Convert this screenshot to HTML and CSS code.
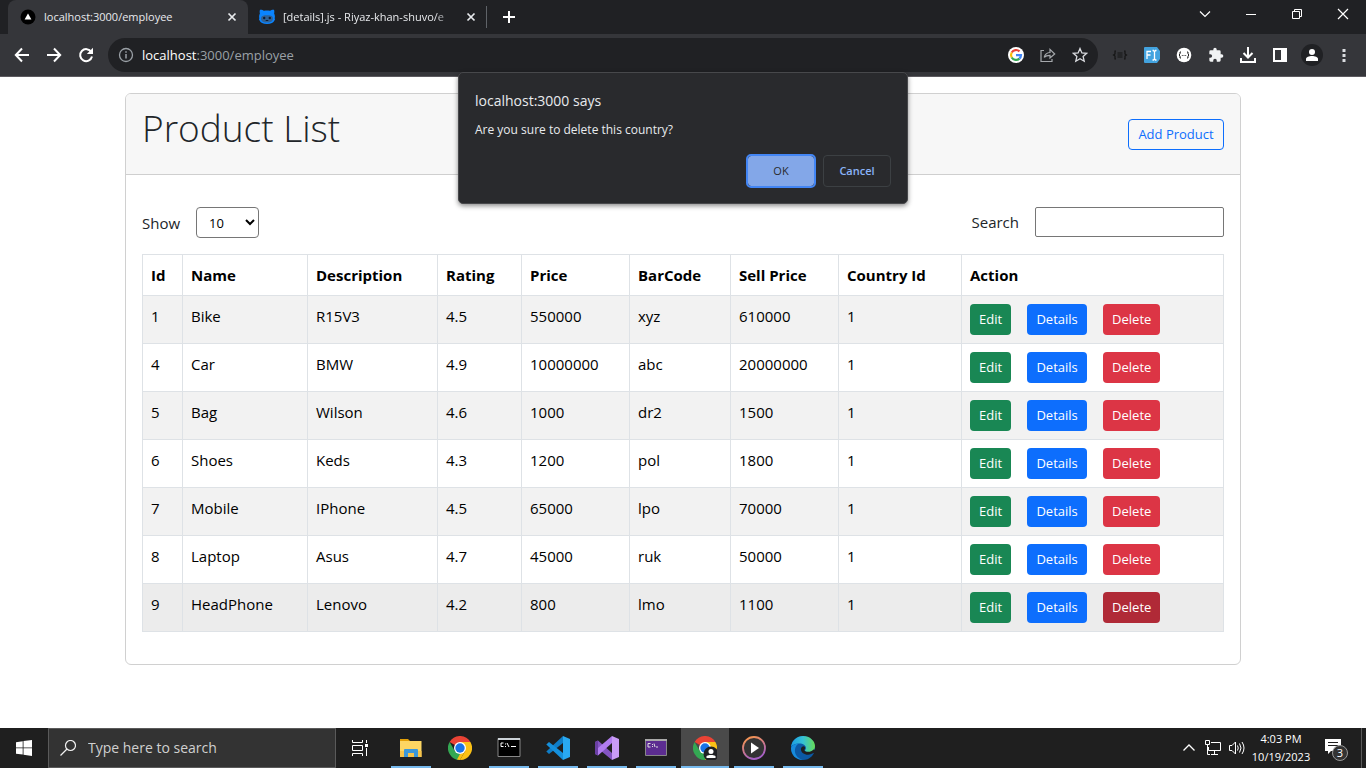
FILE: index.html
```html
<!DOCTYPE html>
<html lang="en">
<head>
<meta charset="utf-8">
<meta name="viewport" content="width=device-width, initial-scale=1">
<title>localhost:3000/employee</title>
<link rel="stylesheet" href="styles.css">
</head>
<body>
<div class="desktop">
  <header class="browser">
    <div class="tabstrip">
      <div class="tab tab-active">
        <svg class="icon16" viewBox="0 0 16 16"><circle cx="8" cy="8" r="7.5" fill="#000"/><path d="M8 4.5 11.4 10.5H4.6z" fill="#fff"/></svg>
        <span class="tab-title">localhost:3000/employee</span>
        <button class="tab-close" aria-label="Close tab"><svg class="icon16" viewBox="0 0 16 16"><path d="M4.5 4.5l7 7M11.5 4.5l-7 7" stroke="#e8eaed" stroke-width="1.7"/></svg></button>
      </div>
      <div class="tab">
        <svg class="icon16" viewBox="0 0 16 16"><path d="M1 .8C2 .3 4 1 5 1.8c2-.4 4-.4 6 0C12 1 14 .3 15 .8c.5 1.200.4 2.600.1 3.700.8 1.300 1 3 .6 4.800L16 11l-.7.6C14.700 14 12 15 8 15S1.300 14 .7 11.600L0 11l.3-1.700C0 7.500.1 5.800.9 4.500.6 3.400.5 2 1 .8z" fill="#0a84ff"/><path d="M4 6.700c2-.5 6-.5 8 0 2.200.5 2.300 3.300 1.500 4.800-.8 1.500-2.800 2-5.500 2s-4.700-.5-5.500-2C1.700 10 1.800 7.200 4 6.700z" fill="#2d6299"/><circle cx="5.200" cy="9" r="1.200" fill="#111d31"/><circle cx="10.800" cy="9" r="1.200" fill="#111d31"/><path d="M6.700 11.500h2.600" stroke="#111d31"/></svg>
        <span class="tab-title tab-title-fade">[details].js - Riyaz-khan-shuvo/e</span>
        <button class="tab-close" aria-label="Close tab"><svg class="icon16" viewBox="0 0 16 16"><path d="M4.500 4.500l7 7M11.500 4.500l-7 7" stroke="#e8eaed" stroke-width="1.700"/></svg></button>
      </div>
      <button class="new-tab" aria-label="New tab"><svg class="icon16" viewBox="0 0 16 16"><path d="M8 2v12M2 8h12" stroke="#fff" stroke-width="2"/></svg></button>
      <div class="window-controls">
        <button aria-label="Search tabs"><svg class="icon16" viewBox="0 0 16 16"><path d="M3 5.500l5 5 5-5" fill="none" stroke="#fff" stroke-width="1.200"/></svg></button>
        <button aria-label="Minimize"><svg class="icon16" viewBox="0 0 16 16"><path d="M3 8.500h10" stroke="#fff"/></svg></button>
        <button aria-label="Restore"><svg class="icon16" viewBox="0 0 16 16"><path d="M3.500 5.500h7v7h-7zM5.500 5.500v-2h7v7h-2" fill="none" stroke="#fff"/></svg></button>
        <button aria-label="Close"><svg class="icon16" viewBox="0 0 16 16"><path d="M3 3l10 10M13 3L3 13" stroke="#fff" stroke-width="1.200"/></svg></button>
      </div>
    </div>
    <div class="toolbar">
      <div class="tools">
        <button aria-label="Back"><svg class="icon16" viewBox="0 0 16 16"><path d="M15 8H2M8 1.500L1.800 8 8 14.500" fill="none" stroke="#fff" stroke-width="2"/></svg></button>
        <button aria-label="Forward"><svg class="icon16" viewBox="0 0 16 16"><path d="M1 8h13M8 1.500L14.200 8 8 14.500" fill="none" stroke="#fff" stroke-width="2"/></svg></button>
        <button aria-label="Reload"><svg class="icon16" viewBox="0 0 16 16"><path d="M13.300 5A6 6 0 1 0 14 9.500" fill="none" stroke="#fff" stroke-width="2"/><path d="M15 .8v6.200H8.800z" fill="#fff"/></svg></button>
      </div>
      <div class="omnibox">
        <svg class="icon16" viewBox="0 0 16 16"><circle cx="8" cy="8" r="6.500" fill="none" stroke="#9aa0a6" stroke-width="1.300"/><path d="M8 7v4.500M8 4.300v1.500" stroke="#9aa0a6" stroke-width="1.500"/></svg>
        <div class="address" role="textbox" aria-label="Address"><span class="host">localhost</span>:3000/employee</div>
        <div class="tools">
          <button aria-label="Google Lens"><svg class="icon16" viewBox="0 0 16 16"><circle cx="8" cy="8" r="8" fill="#fff"/><g fill="none" stroke-width="2.200"><path d="M11.500 4.400A5 5 0 0 0 3.700 5.500" stroke="#ea4335"/><path d="M3.700 5.500a5 5 0 0 0 0 5" stroke="#fbbc05"/><path d="M3.700 10.500a5 5 0 0 0 7.700 1.100" stroke="#34a853"/><path d="M11.400 11.600A5 5 0 0 0 13 8.100H8" stroke="#4285f4"/></g></svg></button>
          <button aria-label="Share"><svg class="icon16" viewBox="0 0 16 16"><path d="M4 3.500H1v11h11V12M4.200 10.300C5 7 7 5.600 10 5.500V2.400L14.700 7 10 11V8.300c-2.600 0-4.500.5-5.800 2z" fill="none" stroke="#a5a8ac" stroke-width="1.200"/></svg></button>
          <button aria-label="Bookmark"><svg class="icon16" viewBox="0 0 16 16"><path d="M8 1.500l1.900 4.400 4.800.4-3.600 3.200 1.100 4.700L8 11.700l-4.200 2.500 1.100-4.700L1.300 6.300l4.800-.4z" fill="none" stroke="#dadce0" stroke-width="1.300"/></svg></button>
        </div>
      </div>
      <div class="tools">
        <button aria-label="JSON formatter"><svg class="icon16" viewBox="0 0 16 16"><path d="M4 4H3v3L1.500 8 3 9v3h1M12 4h1v3l1.500 1L13 9v3h-1M5.500 6h5M5.500 8h5M5.500 10h5" fill="none" stroke="#151515" stroke-width="1.200"/></svg></button>
        <button aria-label="Font finder"><svg class="icon16" viewBox="0 0 16 16"><path d="M1 0h12l3 4v8l-3 4H1q-1 0-1-1V1q0-1 1-1z" fill="#43a3df"/><path d="M3 12V4.500h4M3 8h3.500M8.500 3.500h1L10.500 5v7l-1 1h-1M12.500 3.500h-1L10.500 5M10.500 12l1 1h1" fill="none" stroke="#fff" stroke-width="1.300"/></svg></button>
        <button aria-label="JSON viewer"><svg class="icon16" viewBox="0 0 16 16"><circle cx="8" cy="8" r="7.300" fill="#fff"/><path d="M5 5H4v2L3 8l1 1v2h1M11 5h1v2l1 1-1 1v2h-1" fill="none" stroke="#222"/><path d="M5.800 8.500h4.400" stroke="#444" stroke-dasharray="1 .7"/></svg></button>
        <button aria-label="Extensions"><svg class="icon16" viewBox="0 0 24 24"><path d="M20.500 11H19V7a2 2 0 0 0-2-2h-4V3.500a2.500 2.500 0 0 0-5 0V5H4a2 2 0 0 0-2 2v3.800h1.500a2.700 2.700 0 0 1 0 5.400H2V20a2 2 0 0 0 2 2h3.800v-1.500a2.700 2.700 0 0 1 5.400 0V22H17a2 2 0 0 0 2-2v-4h1.500a2.500 2.500 0 0 0 0-5z" fill="#f1f3f4"/></svg></button>
        <button aria-label="Downloads"><svg class="icon16" viewBox="0 0 16 16"><path d="M8 0v10M3.500 6L8 10.500 12.500 6M1 11v4h14v-4" fill="none" stroke="#fff" stroke-width="2"/></svg></button>
        <button aria-label="Side panel"><svg class="icon16" viewBox="0 0 16 16"><path d="M1 1h14v14H1zM3 3v10h6V3z" fill="#fff" fill-rule="evenodd"/></svg></button>
        <button aria-label="Profile"><svg class="icon22" viewBox="0 0 22 22"><circle cx="11" cy="11" r="11" fill="#202124"/><circle cx="11" cy="8" r="3" fill="#fff"/><path d="M5 17v-2c0-2 3-3 6-3s6 1 6 3v2z" fill="#fff"/></svg></button>
        <button aria-label="Menu"><svg class="icon16" viewBox="0 0 16 16"><path d="M6.500 2h3v3h-3zM6.500 7h3v3h-3zM6.500 12h3v3h-3z" fill="#dadce0"/></svg></button>
      </div>
    </div>
  </header>

  <div class="dialog" role="alertdialog" aria-labelledby="dlg-title" aria-describedby="dlg-text">
    <div class="dialog-title" id="dlg-title">localhost:3000 says</div>
    <p class="dialog-text" id="dlg-text">Are you sure to delete this country?</p>
    <div class="dialog-actions">
      <button class="dialog-btn dialog-ok">OK</button>
      <button class="dialog-btn dialog-cancel">Cancel</button>
    </div>
  </div>

  <main class="page">
    <div class="container">
      <section class="card">
        <div class="card-header">
          <h1 class="title">Product List</h1>
          <button class="btn btn-outline">Add Product</button>
        </div>
        <div class="card-body">
          <div class="controls">
            <label class="control">Show
              <select class="select"><option>10</option><option>25</option><option>50</option></select>
            </label>
            <label class="control">Search
              <input class="search" type="text">
            </label>
          </div>
          <table class="table">
            <colgroup><col class="c-id"><col class="c-name"><col class="c-desc"><col class="c-rating"><col class="c-price"><col class="c-code"><col class="c-price"><col class="c-country"><col></colgroup>
            <thead><tr><th>Id</th><th>Name</th><th>Description</th><th>Rating</th><th>Price</th><th>BarCode</th><th>Sell Price</th><th>Country Id</th><th>Action</th></tr></thead>
            <tbody>
              <tr><td>1</td><td>Bike</td><td>R15V3</td><td>4.5</td><td>550000</td><td>xyz</td><td>610000</td><td>1</td><td><div class="actions"><button class="btn btn-edit">Edit</button><button class="btn btn-details">Details</button><button class="btn btn-delete">Delete</button></div></td></tr>
              <tr><td>4</td><td>Car</td><td>BMW</td><td>4.9</td><td>10000000</td><td>abc</td><td>20000000</td><td>1</td><td><div class="actions"><button class="btn btn-edit">Edit</button><button class="btn btn-details">Details</button><button class="btn btn-delete">Delete</button></div></td></tr>
              <tr><td>5</td><td>Bag</td><td>Wilson</td><td>4.6</td><td>1000</td><td>dr2</td><td>1500</td><td>1</td><td><div class="actions"><button class="btn btn-edit">Edit</button><button class="btn btn-details">Details</button><button class="btn btn-delete">Delete</button></div></td></tr>
              <tr><td>6</td><td>Shoes</td><td>Keds</td><td>4.3</td><td>1200</td><td>pol</td><td>1800</td><td>1</td><td><div class="actions"><button class="btn btn-edit">Edit</button><button class="btn btn-details">Details</button><button class="btn btn-delete">Delete</button></div></td></tr>
              <tr><td>7</td><td>Mobile</td><td>IPhone</td><td>4.5</td><td>65000</td><td>lpo</td><td>70000</td><td>1</td><td><div class="actions"><button class="btn btn-edit">Edit</button><button class="btn btn-details">Details</button><button class="btn btn-delete">Delete</button></div></td></tr>
              <tr><td>8</td><td>Laptop</td><td>Asus</td><td>4.7</td><td>45000</td><td>ruk</td><td>50000</td><td>1</td><td><div class="actions"><button class="btn btn-edit">Edit</button><button class="btn btn-details">Details</button><button class="btn btn-delete">Delete</button></div></td></tr>
              <tr class="row-hover"><td>9</td><td>HeadPhone</td><td>Lenovo</td><td>4.2</td><td>800</td><td>lmo</td><td>1100</td><td>1</td><td><div class="actions"><button class="btn btn-edit">Edit</button><button class="btn btn-details">Details</button><button class="btn btn-delete btn-pressed">Delete</button></div></td></tr>
            </tbody>
          </table>
        </div>
      </section>
    </div>
  </main>

  <footer class="taskbar">
    <button class="task" aria-label="Start"><svg class="icon16" viewBox="0 0 16 16"><path d="M0 2.200L6.700 1.200v6.300H0zM7.500 1.100L16 0v7.500H7.500zM0 8.300h6.700v6.300L0 13.700zM7.500 8.300H16V16l-8.500-1.200z" fill="#fff"/></svg></button>
    <label class="task-search">
      <svg class="icon16" viewBox="0 0 16 16"><circle cx="10.500" cy="5.500" r="5" fill="none" stroke="#f1f1f1" stroke-width="1.200"/><path d="M7 9L.5 15.500" stroke="#f1f1f1" stroke-width="1.200"/></svg>
      <input type="text" placeholder="Type here to search" aria-label="Type here to search">
    </label>
    <button class="task" aria-label="Task view"><svg class="icon16" viewBox="0 0 16 16"><path d="M.5 0v2.500h10V0M.5 16v-2.500h10V16M.5 5.500h10v5H.5zM14.500 0v3M14.500 8v8" fill="none" stroke="#fff"/><path d="M13 4h3v3h-3z" fill="#fff"/></svg></button>
    <div class="apps">
      <button class="task running" aria-label="File Explorer"><svg class="icon24" viewBox="0 0 24 24"><path d="M1 4V3h8l2 2h11v3H1z" fill="#e3a008"/><path d="M1 5h21.500v16H1z" fill="#fdd663"/><path d="M1 15h21.500v6H1z" fill="#f6c34a"/><path d="M5 21v-7q0-1 1-1h12q1 0 1 1v7h-4v-4H9v4z" fill="#3b97d9"/></svg></button>
      <button class="task" aria-label="Chrome"><svg class="icon24" viewBox="0 0 24 24"><path d="M12 12L1.600 6A12 12 0 0 1 22.400 6z" fill="#ea4335"/><path d="M12 6h10.400A12 12 0 0 1 12 24l5.200-9z" fill="#fbc116"/><path d="M1.600 6l5.200 9L12 18l-0 6A12 12 0 0 1 1.600 6z" fill="#34a853"/><path d="M12 24l5.200-9-5.200 3-3 5.600z" fill="#fbc116"/><circle cx="12" cy="12" r="6" fill="#fff"/><circle cx="12" cy="12" r="4.700" fill="#1a73e8"/></svg></button>
      <button class="task running" aria-label="Command Prompt"><svg class="icon24" viewBox="0 0 24 24"><path d="M1 2.500h22v18H1z" fill="#000" stroke="#888"/><path d="M1 2h22v2H1z" fill="#ccd3d8"/><path d="M6.500 7H4v3.500h2.500M8.500 7.500v1M8.500 10v1M10 7l2 4M14 10.500h5" fill="none" stroke="#fff"/></svg></button>
      <button class="task running" aria-label="Visual Studio Code"><svg class="icon24" viewBox="0 0 24 24"><path d="M17 0l7 3v18l-7 3z" fill="#29a9f2"/><path d="M17 0v7L3 18 .3 15.500z" fill="#0f7dc7"/><path d="M17 24v-7L3 6 .3 8.500z" fill="#1590dc"/></svg></button>
      <button class="task running" aria-label="Visual Studio"><svg class="icon24" viewBox="0 0 24 24"><path d="M0 6l3-1.500L17 17v7L3 12.500v7L0 18z" fill="#8455c3"/><path d="M3 19.500L17 7V0L3 12z" fill="#b17cf0"/><path d="M0 6l3-1.500v15L0 18z" fill="#6a3fa3"/><path d="M17 0l7 3v18l-7 3z" fill="#c99bf7"/></svg></button>
      <button class="task running" aria-label="Terminal"><svg class="icon24" viewBox="0 0 24 24"><path d="M1.500 3.500h21v16h-21z" fill="#5c2d91" stroke="#888"/><path d="M1 3h22v2H1z" fill="#aaa"/><path d="M6.500 7.500H4V11h2.500M8.500 8v1M8.500 10v1M10 7.500l1 3.500M12 11h2" fill="none" stroke="#ddd"/></svg></button>
      <button class="task running focused" aria-label="Chrome profile"><svg class="icon24" viewBox="0 0 24 24"><path d="M12 12L1.600 6A12 12 0 0 1 22.400 6z" fill="#ea4335"/><path d="M12 6h10.400A12 12 0 0 1 12 24l5.200-9z" fill="#fbc116"/><path d="M1.600 6l5.200 9L12 18v6A12 12 0 0 1 1.600 6z" fill="#34a853"/><circle cx="12" cy="12" r="6" fill="#fff"/><circle cx="12" cy="12" r="4.700" fill="#1a73e8"/><circle cx="18" cy="18" r="7.500" fill="#202124"/><circle cx="18" cy="15.500" r="2.500" fill="#fff"/><path d="M13.500 22v-1.500c0-2 9-2 9 0V22z" fill="#fff"/></svg></button>
      <button class="task running" aria-label="Media Player"><svg class="icon24" viewBox="0 0 24 24"><defs><linearGradient id="ring" x2="0.400" y2="1"><stop stop-color="#ff9b45"/><stop offset="1" stop-color="#a55fc4"/></linearGradient></defs><circle cx="12" cy="12" r="11" fill="#333" stroke="url(#ring)" stroke-width="1.800"/><path d="M9 6.500v11l8-5.500z" fill="#fff"/></svg></button>
      <button class="task running" aria-label="Edge"><svg class="icon24" viewBox="0 0 24 24"><defs><linearGradient id="wave"><stop stop-color="#1b9de2"/><stop offset=".5" stop-color="#35c1d5"/><stop offset="1" stop-color="#67dc55"/></linearGradient></defs><circle cx="12" cy="12" r="12" fill="#0c59a4"/><path d="M0 11C1 4 6 0 12 0c7 0 12 5 12 10 0 4-3 6-6.500 6-2 0-3.500-.7-3.500-1.500 0-.7 1-1 1-2.500 0-2.500-3-4.500-6.500-4.500C4.500 7.500 1 9 0 11z" fill="url(#wave)"/><path d="M0 12c1-3 4.500-4.500 8-4.500-2.500 1-4.500 4.500-4 8.500.6 4 4 7 8 8C5 24 0 19 0 12z" fill="#178bdc"/><path d="M10 12.500c-.5 3.500 3 6.200 7 6.200 2.500 0 4-1 5.500-1.700l2 .5V14l-2-.5c-1.500 2-4 2.500-6 2.300-2.500-.2-3.500-1.300-3-2 1-1.600.5-3-.5-3.500-1.500 0-2.500.7-3 2.200z" fill="#1f1f1f"/></svg></button>
    </div>
    <div class="tray">
      <button aria-label="Show hidden icons"><svg class="icon16" viewBox="0 0 16 16"><path d="M2.500 10.500L8 5l5.500 5.500" fill="none" stroke="#fff" stroke-width="1.300"/></svg></button>
      <button aria-label="Network"><svg class="icon16" viewBox="0 0 16 16"><path d="M6 2.500h9.500v8h-12V7M9.500 11v3M6 14.500h7M.5.500h4v4h-4zM2.500 5v9.500h2.500" fill="none" stroke="#fff"/></svg></button>
      <button aria-label="Volume"><svg class="icon18" viewBox="0 0 18 18"><path d="M1.500 6.500H4L7.500 3v12L4 11.500H1.500zM9.500 6.500q1.500 2.500 0 5M11.500 4.500q3 4.500 0 9M14 3q4 6 0 12" fill="none" stroke="#fff"/></svg></button>
      <button class="clock"><span>4:03 PM</span><span>10/19/2023</span></button>
      <button class="notify" aria-label="3 notifications"><svg class="icon26" viewBox="0 0 26 26"><path d="M1 4h16v12H7l-3 3v-3H1z" fill="#fff"/><path d="M4 7.500h10M4 10.500h10" stroke="#1f1f1f"/><circle cx="16" cy="18" r="7.500" fill="#333" stroke="#999"/></svg><span class="badge">3</span></button>
    </div>
  </footer>
</div>
</body>
</html>
```
FILE: styles.css
```css
* { box-sizing: border-box; }
body { margin: 0; font-family: "Open Sans", "Noto Sans", sans-serif; font-size: 15px; line-height: 24px; color: #212529; background: #fff; }
button, input, select { font: inherit; color: inherit; margin: 0; }
button { padding: 0; border: 0; background: none; }
svg { display: block; flex: none; }
.icon16 { width: 16px; height: 16px; }
.icon18 { width: 18px; height: 18px; }
.icon22 { width: 22px; height: 22px; }
.icon24 { width: 24px; height: 24px; }
.icon26 { width: 26px; height: 26px; }

.desktop { position: relative; min-height: 100vh; display: flex; flex-direction: column; }

/* Browser frame */
.browser { background: #35363a; color: #e8eaed; border-bottom: 1px solid #5c5a5f; }
.tabstrip { display: flex; align-items: stretch; height: 34px; padding-left: 8px; background: #202124; }
.tab { display: flex; align-items: center; gap: 8px; width: 239px; padding: 0 7px 0 11px; border-right: 1px solid; border-image: linear-gradient(transparent 20%, #5f6368 20% 80%, transparent 80%) 1; }
.tab-active { width: 240px; padding: 0 8px 0 12px; border: 0; border-radius: 8px 8px 0 0; background: #35363a; }
.tab-title { flex: 1; min-width: 0; overflow: hidden; white-space: nowrap; font-size: 11px; font-weight: 500; }
.tab-title-fade { -webkit-mask-image: linear-gradient(90deg, #000 88%, transparent); mask-image: linear-gradient(90deg, #000 88%, transparent); }
.new-tab { width: 44px; display: grid; place-items: center; }
.window-controls { display: flex; margin-left: auto; height: 28px; }
.window-controls button { width: 46px; display: grid; place-items: center; }
.toolbar { display: flex; align-items: center; gap: 6px; height: 42px; padding: 0 6px; }
.tools { display: flex; }
.tools button { width: 32px; height: 34px; display: grid; place-items: center; }
.omnibox { flex: 1; display: flex; align-items: center; gap: 8px; height: 34px; padding: 0 2px 0 10px; border-radius: 17px; background: #202124; }
.address { flex: 1; font-size: 13px; color: #9aa0a6; }
.host { color: #fff; }

/* Confirm dialog */
.dialog { position: absolute; z-index: 2; top: 72px; left: 50%; width: 450px; margin-left: -225px; padding: 16px; border: 1px solid #47484b; border-radius: 5px; background: #292a2d; color: #e8eaed; box-shadow: 0 2px 5px rgba(0, 0, 0, .45); }
.dialog-title { font-size: 14px; line-height: 24px; }
.dialog-text { margin: 7px 0 15px; font-size: 12px; font-weight: 500; line-height: 20px; }
.dialog-actions { display: flex; justify-content: flex-end; gap: 8px; }
.dialog-btn { width: 68px; height: 32px; border-radius: 4px; font-size: 11px; font-weight: 600; line-height: 16px; }
.dialog-ok { border: 1px solid #292a2d; background: #83a7e8; color: #292a2d; outline: 2px solid #4285f4; outline-offset: -1px; font-weight: 500; }
.dialog-cancel { border: 1px solid #3c4043; color: #8ab4f8; }

/* Page */
.page { flex: 1; padding: 16px 0; }
.container { max-width: 1140px; margin: 0 auto; padding: 0 12px; }
.card { border: 1px solid #d0d0d0; border-radius: 6px; overflow: hidden; }
.card-header { display: flex; align-items: center; justify-content: space-between; padding: 8px 16px; border-bottom: 1px solid #cfcfcf; background: #f7f7f7; }
.title { margin: 0; padding: 2px 0 14px; font-size: 37px; font-weight: 300; line-height: 48px; }
.card-body { padding: 32px 16px; }
.controls { display: flex; align-items: flex-start; justify-content: space-between; margin-bottom: 16px; }
.control { display: flex; align-items: center; gap: 16px; line-height: 30px; }
.select { width: 63px; height: 31px; padding: 0 0 0 8px; border: 1px solid #767676; border-radius: 4px; background: #fff; color: #000; font-size: 13px; }
.search { width: 189px; height: 30px; border: 1px solid #767676; border-radius: 2px; padding: 0 8px; background: #fff; }
.table { width: 100%; table-layout: fixed; border-collapse: collapse; color: #000; }
.table th, .table td { padding: 8px; border: 1px solid #dee2e6; text-align: left; vertical-align: top; }
.table th { font-weight: 700; }
.table tbody tr:nth-child(odd) { background: #f2f2f2; }
.table tbody .row-hover:nth-child(odd) { background: #ececec; }
.c-id { width: 40px; }
.c-name { width: 125px; }
.c-desc { width: 130px; }
.c-rating { width: 84px; }
.c-price { width: 108px; }
.c-code { width: 101px; }
.c-country { width: 123px; }
.actions { display: flex; gap: 16px; }
.btn { padding: 4px 8px; border: 1px solid transparent; border-radius: 4px; font-size: 13px; line-height: 21px; color: #fff; }
.btn-outline { min-width: 96px; border-color: #0d6efd; color: #0d6efd; }
.btn-edit { background: #198754; }
.btn-details { min-width: 60px; background: #0d6efd; }
.btn-delete { background: #dc3545; }
.btn-pressed { background: #b02a37; }

/* Taskbar */
.taskbar { display: flex; height: 40px; background: #1f1f1f; color: #fff; }
.task { width: 48px; height: 40px; display: grid; place-items: center; }
.task-search { width: 288px; display: flex; align-items: center; gap: 12px; padding: 0 11px; border: 1px solid #5a5a5a; background: #333; }
.task-search input { flex: 1; min-width: 0; padding: 0; border: 0; background: none; outline: 0; font-size: 14px; }
.task-search input::placeholder { color: #d0d0d0; opacity: 1; }
.apps { display: flex; gap: 1px; margin-left: 3px; }
.running { background: linear-gradient(#76b9ed, #76b9ed) center bottom / 40px 2px no-repeat; }
.focused { background: linear-gradient(#76b9ed, #76b9ed) center bottom / 100% 2px no-repeat #4a4a4a; }
.tray { display: flex; align-items: center; margin-left: auto; margin-right: 4px; border-right: 1px solid #5a5a5a; }
.tray button { min-width: 24px; height: 40px; display: grid; place-items: center; }
.tray .clock { width: 64px; align-content: center; font-size: 11px; line-height: 18px; }
.tray .notify { position: relative; width: 48px; }
.badge { position: absolute; left: 22px; top: 17px; width: 10px; font-size: 11px; line-height: 16px; text-align: center; }
```
